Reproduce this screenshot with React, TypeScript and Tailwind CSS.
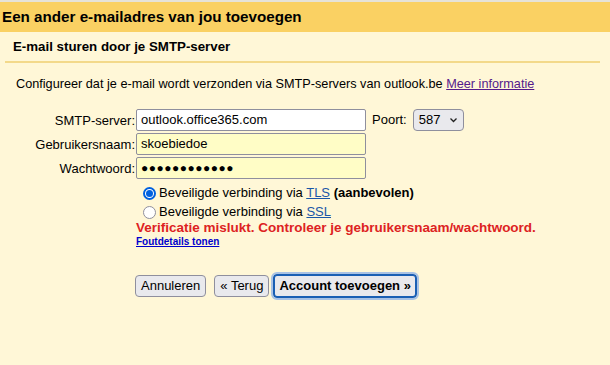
import React from 'react';

const App: React.FC = () => {
  return (
    <div
      className="w-[610px] h-[365px] bg-[#fff7d7] text-black overflow-hidden flex flex-col"
      style={{ fontFamily: '"Liberation Sans", Arial, sans-serif' }}
    >
      <div className="h-[2px] bg-[#e6e3d8]" />
      {/* Title bar */}
      <div className="h-[30px] bg-[#fad163] flex items-center px-[2px] text-[15.2px] font-bold">
        Een ander e-mailadres van jou toevoegen
      </div>

      <div className="px-[5px]">
        <div className="h-[31px] flex items-center pl-[8px] text-[13.3px] font-bold border-b-2 border-[#f3d98a] w-[595px]">
          E-mail sturen door je SMTP-server
        </div>
      </div>

      <div className="pl-[16px] pt-[12px] text-[12.7px]">
        Configureer dat je e-mail wordt verzonden via SMTP-servers van outlook.be{' '}
        <a href="#" className="text-[#551a8b] underline">Meer informatie</a>
      </div>

      {/* Form */}
      <div className="mt-[15px] grid grid-cols-[136px_auto] gap-y-[2px] text-[13px]">
        <div className="text-right pt-[2px] pr-[1px]">SMTP-server:</div>
        <div className="flex items-center gap-[6px]">
          <div className="w-[230px] h-[22px] bg-white border border-[#8f8f9d] rounded-[2px] flex items-center px-[4px] text-[13px]">
            outlook.office365.com
          </div>
          <span className="text-[13px]">Poort:</span>
          <div className="w-[51px] h-[22px] bg-[#e9e9ed] border border-[#8f8f9d] rounded-[4px] flex items-center justify-between px-[5px] text-[13px]">
            <span>587</span>
            <svg width="9" height="6" viewBox="0 0 9 6" fill="none">
              <path d="M1.5 1.5 L4.5 4.5 L7.5 1.5" stroke="#222" strokeWidth="1.3" />
            </svg>
          </div>
        </div>

        <div className="text-right pt-[2px] pr-[1px]">Gebruikersnaam:</div>
        <div>
          <div className="w-[230px] h-[22px] bg-[#fffdc6] border border-[#8f8f9d] rounded-[2px] flex items-center px-[4px] text-[13px]">
            skoebiedoe
          </div>
        </div>

        <div className="text-right pt-[2px] pr-[1px]">Wachtwoord:</div>
        <div>
          <div className="w-[230px] h-[22px] bg-[#fffdc6] border border-[#8f8f9d] rounded-[2px] flex items-center px-[4px] text-[12px] tracking-[0.5px]">
            ●●●●●●●●●●●●
          </div>
        </div>

        <div />
        <div className="pl-[7px] pt-[2px] flex flex-col text-[13px] leading-[20px]">
          <label className="flex items-center gap-[3px]">
            <span className="w-[13px] h-[13px] rounded-full border-2 border-[#0060df] flex items-center justify-center bg-white">
              <span className="w-[7px] h-[7px] rounded-full bg-[#0060df]" />
            </span>
            <span>
              Beveiligde verbinding via <a href="#" className="text-[#1a56a8] underline">TLS</a>{' '}
              <b>(aanbevolen)</b>
            </span>
          </label>
          <label className="flex items-center gap-[3px] -mt-[1px]">
            <span className="w-[13px] h-[13px] rounded-full border border-[#8f8f9d] bg-white" />
            <span>
              Beveiligde verbinding via <a href="#" className="text-[#1a56a8] underline">SSL</a>
            </span>
          </label>
        </div>

        <div />
        <div className="-mt-[4px]">
          <div className="text-[13.5px] font-bold text-[#dd2222] leading-[16px]">
            Verificatie mislukt. Controleer je gebruikersnaam/wachtwoord.
          </div>
          <a href="#" className="block text-[10px] font-bold text-[#0000cc] underline leading-[12px]">
            Foutdetails tonen
          </a>
        </div>
      </div>

      {/* Buttons */}
      <div className="mt-[26px] pl-[135px] flex items-center text-[13px]">
        <button className="h-[22px] px-[5px] bg-[#e9e9ed] border border-[#8f8f9d] rounded-[4px]">
          Annuleren
        </button>
        <button className="h-[22px] px-[5px] bg-[#e9e9ed] border border-[#8f8f9d] rounded-[4px] ml-[8px]">
          « Terug
        </button>
        <button className="h-[24px] px-[4px] bg-[#e9e9ed] border-2 border-[#1a5fb4] rounded-[4px] font-bold ml-[4px] outline outline-2 outline-[#a9c2e4]">
          Account toevoegen »
        </button>
      </div>
    </div>
  );
};

export default App;
